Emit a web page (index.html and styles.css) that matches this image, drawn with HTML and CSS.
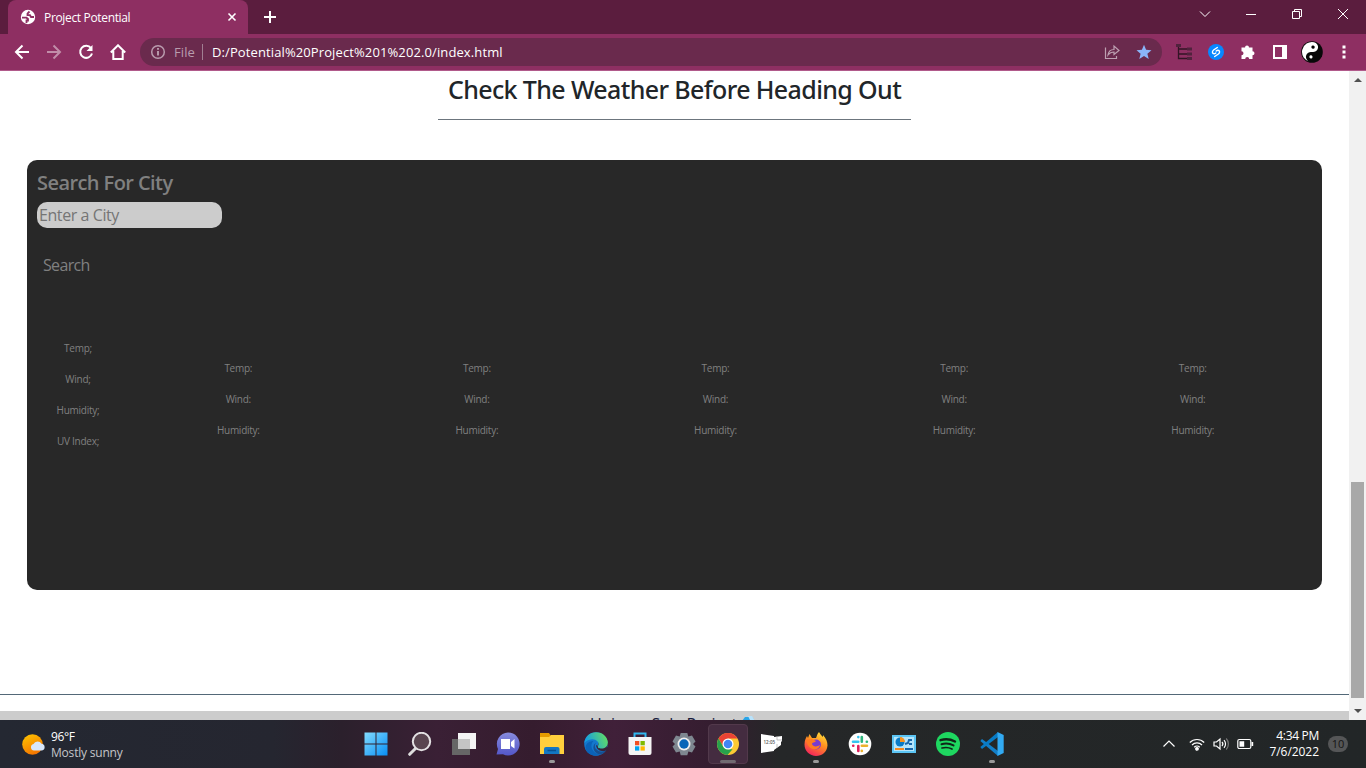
FILE: index.html
```html
<!DOCTYPE html>
<html lang="en">
<head>
<meta charset="utf-8">
<title>Project Potential</title>
<link rel="stylesheet" href="styles.css">
</head>
<body>
<div class="desktop">
  <header class="tabstrip">
    <div class="tab">
      <svg width="16" height="16" viewBox="0 0 16 16"><circle cx="8" cy="8" r="7.2" fill="#fff"/><path d="M9.500 2.500 7.500 4.500v1.700H10l1 1.800h3M2 8.700h4.500L8 10v1.500H6.500V14" fill="none" stroke="#8e2f62" stroke-width="1.800"/></svg>
      <span class="tab-title">Project Potential</span>
      <svg class="tab-close" width="10" height="10" viewBox="0 0 10 10"><path d="m1.500 1.500 7 7m0-7-7 7" stroke="#fff" stroke-width="1.600"/></svg>
    </div>
    <svg class="new-tab" width="14" height="14" viewBox="0 0 14 14"><path d="M7 1v12M1 7h12" stroke="#fff" stroke-width="2"/></svg>
    <div class="window-controls">
      <svg width="12" height="12" viewBox="0 0 12 12"><path d="m1 3.500 5 5 5-5"/></svg>
      <svg width="12" height="12" viewBox="0 0 12 12"><path d="M1 6.500h10"/></svg>
      <svg width="12" height="12" viewBox="0 0 12 12"><path d="M1.500 3.500h7v7h-7zM3.500 3.500v-2h7v7h-2"/></svg>
      <svg width="12" height="12" viewBox="0 0 12 12"><path d="m1 1 10 10M11 1 1 11"/></svg>
    </div>
  </header>
  <div class="toolbar">
    <div class="nav">
      <svg width="16" height="16" viewBox="0 0 16 16"><path d="M15 8H2m6.500-6.500L2 8l6.500 6.500"/></svg>
      <svg class="dim" width="16" height="16" viewBox="0 0 16 16"><path d="M1 8h13M7.500 1.500 14 8l-6.500 6.500"/></svg>
      <svg width="16" height="16" viewBox="0 0 16 16"><path d="M13 4.200A6 6 0 1 0 14 9.500"/><path d="M14.500 1v6h-6z" fill="#fff" stroke="none"/></svg>
      <svg width="16" height="16" viewBox="0 0 16 16"><path d="M.8 8.500 8 1.300l7.200 7.200M3.300 7v8h9.400V7"/></svg>
    </div>
    <div class="address">
      <svg width="16" height="16" viewBox="0 0 16 16"><circle cx="8" cy="8" r="6.300" fill="none" stroke="#b99bad" stroke-width="1.500"/><path d="M8 7v4.500M8 4v1.700" stroke="#c5abba" stroke-width="1.700"/></svg>
      <span class="scheme">File</span>
      <span class="divider"></span>
      <span class="url">D:/Potential%20Project%201%202.0/index.html</span>
      <svg class="share" width="16" height="16" viewBox="0 0 16 16"><path d="M1.500 3.500v11h11V12M4 11c.5-4 3-5.500 6-5.500V2l5 4.500-5 4V8C7.500 8 5.500 9 4 11z" fill="none" stroke="#bda0b1" stroke-width="1.200"/></svg>
      <svg width="16" height="16" viewBox="0 0 16 16"><path d="m8 .8 2.100 5 5.400.4-4.100 3.500 1.300 5.300L8 12.100 3.300 15l1.300-5.300L.5 6.200l5.400-.4z" fill="#8ab4f8"/></svg>
    </div>
    <div class="extensions">
      <svg width="16" height="16" viewBox="0 0 16 16"><path d="M2.500 2v12.500H14M2.500 5H14M2.500 10H14" fill="none" stroke="#321425" stroke-width="1.300"/><path d="M0 0h5v3H0zM11 3.500h5v3h-5zM11 8.500h5v3h-5zM11 13h5v3h-5z" fill="#50223d"/></svg>
      <svg width="16" height="16" viewBox="0 0 16 16"><circle cx="8" cy="8" r="8" fill="#0787ff"/><path d="M9.300 3.500 5.600 6C3.700 7.500 4.300 9.800 6 9.800c.8 0 1.300-.3 1.800-.8M6.700 12.500l3.700-2.500C12.300 8.500 11.700 6.200 10 6.200c-.8 0-1.300.3-1.800.8" fill="none" stroke="#fff" stroke-width="1.400" stroke-linecap="round"/></svg>
      <svg width="16" height="16" viewBox="0 0 16 16"><path d="M1.500 3.500H5a2 2 0 0 1 4 0h3.500v3.700a2 2 0 0 1 0 4V15H9.200a2 2 0 0 0-4 0H1.500v-3.700a2 2 0 0 0 0-4z" fill="#fff"/></svg>
      <svg width="16" height="16" viewBox="0 0 16 16"><path d="M1 1h14v14H1zm2 2v10h7V3z" fill="#fff" fill-rule="evenodd"/></svg>
      <svg class="avatar" width="22" height="22" viewBox="0 0 22 22"><circle cx="11" cy="11" r="10.800" fill="#080808"/><g transform="rotate(12 11 11)"><path d="M11 1a10 10 0 0 0 0 20 5 5 0 0 1 0-10 5 5 0 0 0 0-10z" fill="#fff"/><circle cx="11" cy="6" r="1.700"/><circle cx="11" cy="16" r="1.600" fill="#fff"/></g></svg>
      <svg class="menu-dots" width="4" height="14" viewBox="0 0 4 14"><path d="M.5.500h3v3h-3zM.5 5.500h3v3h-3zM.5 10.500h3v3h-3z" fill="#fff"/></svg>
    </div>
  </div>
  <div class="viewport">
    <main class="page">
      <h2 class="page-title"><span>Check The Weather Before Heading Out</span></h2>
      <section class="weather">
        <h3 class="search-title">Search For City</h3>
        <input class="city" type="text" placeholder="Enter a City">
        <button class="search-button">Search</button>
        <div class="forecast">
          <div class="day today"><p>Temp;</p><p>Wind;</p><p>Humidity;</p><p>UV Index;</p></div>
          <div class="day"><p>Temp:</p><p>Wind:</p><p>Humidity:</p></div>
          <div class="day"><p>Temp:</p><p>Wind:</p><p>Humidity:</p></div>
          <div class="day"><p>Temp:</p><p>Wind:</p><p>Humidity:</p></div>
          <div class="day"><p>Temp:</p><p>Wind:</p><p>Humidity:</p></div>
          <div class="day"><p>Temp:</p><p>Wind:</p><p>Humidity:</p></div>
        </div>
      </section>
      <div class="rule"></div>
      <footer class="footer"><span>Unicorn Solo Project</span><svg width="13" height="12" viewBox="0 0 13 12"><path d="M3 1h7l3 4-6.500 7L0 5z" fill="#2aa5e8"/><path d="M6 0h4l3 5-5-1z" fill="#b8e2fb"/></svg></footer>
    </main>
    <div class="scrollbar">
      <svg width="8" height="4" viewBox="0 0 8 4"><path d="m0 4 4-4 4 4z" fill="#505050"/></svg>
      <div class="thumb"></div>
      <svg width="8" height="4" viewBox="0 0 8 4"><path d="m0 0 4 4 4-4z" fill="#505050"/></svg>
    </div>
  </div>
  <div class="taskbar">
    <div class="widget">
      <svg width="24" height="24" viewBox="0 0 24 24"><defs><linearGradient id="sun" x2=".5" y2="1"><stop stop-color="#ffc800"/><stop offset="1" stop-color="#f47600"/></linearGradient></defs><circle cx="10.500" cy="11.500" r="10.300" fill="url(#sun)"/><path d="M12 17.500a3.300 3.300 0 0 1-.5-6.500 4.500 4.500 0 0 1 8-.2 3.400 3.400 0 0 1 .5 6.700z" fill="#d8e7fb"/></svg>
      <div class="widget-text"><div>96°F</div><div class="condition">Mostly sunny</div></div>
    </div>
    <div class="apps">
      <div class="app"><svg viewBox="0 0 24 24"><defs><linearGradient id="win" x2="1" y2="1"><stop stop-color="#83dcff"/><stop offset="1" stop-color="#078ef4"/></linearGradient></defs><path d="M.5.500h11v11H.5zm12 0h11v11h-11zM.5 12.500h11v11H.5zm12 0h11v11h-11z" fill="url(#win)"/></svg></div>
      <div class="app"><svg viewBox="0 0 24 24"><path d="m8 16-6.300 6.300" stroke="#ddd" stroke-width="3" stroke-linecap="round"/><circle cx="13.500" cy="9.500" r="8.700" fill="#594550" stroke="#e3e1e3" stroke-width="2"/></svg></div>
      <div class="app"><svg viewBox="0 0 24 24"><path d="M6 1h18v16H6z" fill="#f4f4f4"/><path d="M0 7h18v16H0z" fill="#666"/><path d="M6 7h12v10H6z" fill="#c4c4c4"/></svg></div>
      <div class="app"><svg viewBox="0 0 24 24"><defs><linearGradient id="chat" x2="0" y2="1"><stop stop-color="#878bdd"/><stop offset="1" stop-color="#5356c8"/></linearGradient></defs><path d="M12 .5a11.500 11.500 0 1 1-5 21.800L.5 22.500l1.500-5.500A11.500 11.500 0 0 1 12 .5z" fill="url(#chat)"/><path d="M5 7h9v10H5zM15 10l3.500-3v9.500L15 14z" fill="#fff"/></svg></div>
      <div class="app running"><svg viewBox="0 0 24 24"><path d="M0 1h9l2 3-2 2H0z" fill="#e49b00"/><path d="M0 5h9l2-2h13v19H0z" fill="#ffcf3d"/><path d="M4 22v-5a2 2 0 0 1 2-2h11.500a2 2 0 0 1 2 2v5z" fill="#1377c4"/><path d="M7.500 18.500h8.500" stroke="#075292" stroke-width="1.500"/></svg></div>
      <div class="app"><svg viewBox="0 0 24 24"><defs><linearGradient id="edge" y1=".3" x2="1"><stop stop-color="#149ee3"/><stop offset="1" stop-color="#6be356"/></linearGradient></defs><circle cx="12" cy="12" r="11.800" fill="#1478ce"/><path d="M14 15c-1-2 1-3 0-5l10 1c0 4-3 8-10 4z" fill="#38243a"/><path d="M12 13c1 7 7 6.500 11.500 5.500L24 15l-7 1z" fill="#38243a"/><path d="M.3 11C1 4 6.500.200 12 .2c7 0 11.800 5 11.800 10.300 0 4-3 6-6.300 6-2.300 0-4.500-.8-3.500-2.500C16 10 12 7 8 7.200 4.500 7.400 1.800 9 .3 11z" fill="url(#edge)"/><path d="M9.500 9C5 13 8 21.500 16 22.500c-6 3.500-15-1-14.500-7.500C2 11 6 9 9.500 9z" fill="#0b62b8"/><path d="M12 11c-3 3 0 8.500 5.500 8.500 2 0 4-.8 5-1.500-2 2.500-4 4.500-6.500 4.500C9 21.500 7.500 13 12 11z" fill="#164f91"/></svg></div>
      <div class="app"><svg viewBox="0 0 24 24"><path d="M6.500 6V1.500h11V6" fill="none" stroke="#31b8ef" stroke-width="2"/><path d="M.5 5h23v16a2 2 0 0 1-2 2h-19a2 2 0 0 1-2-2z" fill="#f5f5f5"/><path d="M7 9h4.300v4.300H7z" fill="#f25022"/><path d="M12.500 9h4.300v4.300h-4.300z" fill="#7fba00"/><path d="M7 14.300h4.300v4.300H7z" fill="#00a4ef"/><path d="M12.500 14.300h4.300v4.300h-4.300z" fill="#ffb900"/></svg></div>
      <div class="app"><svg viewBox="0 0 24 24"><path d="M8.700 1h6.600l1 3.600 3.700-1 3.500 6-2.500 2.400 2.500 2.600-3.500 6-3.600-1-1.100 3.600H8.700l-1-3.600-3.700 1-3.500-6L3 12 .5 9.500l3.500-6 3.700 1z" fill="#7e8790"/><circle cx="12" cy="12" r="6.500" fill="#eee"/><circle cx="12" cy="12" r="4.700" fill="#0865b8"/></svg></div>
      <div class="app active"><svg viewBox="0 0 24 24"><circle cx="12" cy="12" r="11" fill="#fcc934"/><path d="M2.500 6.500A11 11 0 0 1 21.500 6.500H12L7.500 15z" fill="#ea4335"/><path d="M2.500 6.500 7.400 15 12 17.300h4.600L11.500 23A11 11 0 0 1 2.500 6.500z" fill="#27a14c"/><circle cx="12" cy="12" r="5.500" fill="#fff"/><circle cx="12" cy="12" r="4.300" fill="#4285f4"/></svg></div>
      <div class="app"><svg viewBox="0 0 24 24"><path d="m1 2 13 2v1l8-1v5l-1 1v3l-7 5v1L1 21z" fill="#fff"/><path d="M17 4v4h5M17 12v4" fill="none" stroke="#aaa" stroke-width=".7"/><text class="clock-icon" x="3.500" y="11.500">12:05</text></svg></div>
      <div class="app running"><svg viewBox="0 0 24 24"><defs><linearGradient id="fire" x1=".8" x2=".3" y2="1"><stop stop-color="#ffe33b"/><stop offset=".45" stop-color="#ff9020"/><stop offset="1" stop-color="#f4215d"/></linearGradient></defs><path d="M15 0c1 2 2 3 4 5V3c3 3 4.500 7 4.500 10.500C23 20 18 24 12 24S.3 19 .5 12.500C.6 8 2 6 3 4l1 2 1.500-4L8 6h4c1-2 1-4 3-6z" fill="url(#fire)"/><circle cx="12" cy="12.500" r="5" fill="#783bd0"/><path d="M2 8c2-1 4 0 6-1l4 2c-1 2-4 1-4 3 1 3 5 3 8 1-1 4-4 5-7 4-4-1-6-5-7-9z" fill="#ff7b22"/></svg></div>
      <div class="app"><svg viewBox="0 0 24 24"><circle cx="12" cy="12" r="11.300" fill="#fff"/><g fill="none" stroke-width="2.600" stroke-linecap="round"><path d="M10.300 5v.1M5 9.800h5.300" stroke="#36c5f0"/><path d="M13.800 5v4.800M18.800 9.800h.1" stroke="#2eb67d"/><path d="M13.800 13.800H19M13.800 18.800v.1" stroke="#ecb22e"/><path d="M10.300 14v5M5.200 13.800h.1" stroke="#e01e5a"/></g></svg></div>
      <div class="app"><svg viewBox="0 0 24 24"><path d="M0 3h24v18H0z" fill="#5bc5f4"/><path d="M2 5h20v14H2z" fill="#b5e5fb"/><circle cx="8" cy="10" r="4.500" fill="#087bc7"/><path d="M8 5v5h5A5 5 0 0 0 8 5z" fill="#f79320"/><path d="M3 17h9" stroke="#f58b20" stroke-width="2"/><path d="M13 17h8M13 12l3-1 1-3h3M17 12h3" fill="none" stroke="#1768ad" stroke-width="2"/></svg></div>
      <div class="app"><svg viewBox="0 0 24 24"><circle cx="12" cy="12" r="12" fill="#1ed760"/><g fill="none" stroke="#102418" stroke-linecap="round"><path d="M4.500 8.200c5-1.500 10-1 14.500 1.300" stroke-width="2.400"/><path d="M5.500 12.200c4.300-1.200 8.300-.8 12 1.200" stroke-width="2"/><path d="M6 16c3.500-.9 7-.6 10 1" stroke-width="1.700"/></g></svg></div>
      <div class="app running"><svg viewBox="0 0 24 24"><path d="M2 7 18 19v5L.3 9z" fill="#127fc9"/><path d="M2 17 18 5V0L.3 15z" fill="#087bc5"/><path d="m17.500 0 6.200 3v18l-6.200 3z" fill="#32aaf2"/></svg></div>
    </div>
    <div class="tray">
      <svg width="14" height="14" viewBox="0 0 14 14"><path d="m1.500 9.500 5.500-5.500 5.500 5.500"/></svg>
      <svg class="wifi" width="16" height="16" viewBox="0 0 16 16"><path d="M.8 6.500a10.200 10.200 0 0 1 14.400 0M3 9a7 7 0 0 1 10 0M5.200 11.300a4 4 0 0 1 5.600 0"/><circle cx="8" cy="12.800" r="1.300" fill="#fff"/></svg>
      <svg class="volume" width="16" height="16" viewBox="0 0 16 16"><path d="M1 6h2.500L7 3v10l-3.500-3H1zM9 6a3 3 0 0 1 0 4M11 4.200a5.500 5.500 0 0 1 0 7.600"/><path d="M13.200 2.500a8 8 0 0 1 0 11" stroke="#777"/></svg>
      <svg class="battery" width="17" height="12" viewBox="0 0 17 12"><rect x=".8" y="1.500" width="13" height="9" rx="1.500"/><path d="M2.500 3.200h4.700v5.600H2.500zM14.500 4h1.700v4h-1.700z" fill="#fff" stroke="none"/></svg>
      <div class="clock"><div>4:34 PM</div><div class="date">7/6/2022</div></div>
      <div class="notifications">10</div>
    </div>
  </div>
</div>
</body>
</html>
```
FILE: styles.css
```css
* { box-sizing: border-box; }
body { margin: 0; overflow: hidden; font-family: "Open Sans", "Noto Sans", sans-serif; }
svg { display: block; flex: none; }
.desktop { width: 1366px; height: 768px; display: flex; flex-direction: column; }

.tabstrip { height: 34px; flex: none; display: flex; align-items: center; background: #5b1d3e; padding-left: 8px; }
.tab { width: 240px; height: 34px; border-radius: 8px 8px 0 0; background: #8e2f62; display: flex; align-items: center; padding: 0 11px 0 12px; }
.tab-title { margin-left: 8px; color: #fff; font-size: 12px; letter-spacing: -.34px; white-space: nowrap; }
.tab-close { margin-left: auto; }
.new-tab { margin-left: 15px; }
.window-controls { display: flex; gap: 34px; margin-left: auto; padding: 0 17px 6px 0; fill: none; stroke: #fff; }

.toolbar { height: 37px; flex: none; display: flex; align-items: center; background: #8e2f62; border-bottom: 1px solid #b15a8b; padding: 0 20px 0 14px; }
.nav { display: flex; gap: 16px; width: 126px; fill: none; stroke: #fff; stroke-width: 2; }
.dim { opacity: .45; }
.address { width: 1022px; height: 28px; border-radius: 14px; background: #6a2a4d; display: flex; align-items: center; padding: 0 10px; font-size: 13px; color: #fff; }
.scheme { color: #b99cad; margin-left: 8px; letter-spacing: .1px; }
.divider { width: 1px; height: 16px; background: #a17e92; margin: 0 9px 0 7px; }
.url { letter-spacing: .11px; }
.share { margin: 0 16px 0 auto; }
.extensions { display: flex; align-items: center; gap: 16px; margin-left: 14px; }
.avatar { margin-left: -3px; }
.menu-dots { margin-left: 3px; }

.viewport { height: 649px; flex: none; display: flex; overflow: hidden; background: #fff; }
.page { width: 1349px; overflow: hidden; }
.page-title { margin: 0 auto; width: 473px; height: 49px; border-bottom: 1px solid #6c757d; font-size: 25px; line-height: 36px; font-weight: 500; font-family: "Noto Sans", "Open Sans", sans-serif; text-align: center; color: #212529; white-space: nowrap; letter-spacing: -.62px; }
.weather { margin: 40px 27px 0; height: 430px; border-radius: 10px; background: #282828; color: #808080; padding: 10px; display: flex; flex-direction: column; align-items: flex-start; }
.search-title { margin: 0; height: 32px; font-size: 20px; line-height: 26px; font-weight: 600; letter-spacing: -.57px; }
.city { width: 185px; height: 26px; border: 0; border-radius: 10px; background: #ccc; padding: 1px 2px; font: 16px "Open Sans", sans-serif; letter-spacing: -.42px; }
.city::placeholder { color: #757575; }
.search-button { margin-top: 24px; height: 25px; padding: 0 6px; border: 0; background: none; color: #808080; font: 16px "Open Sans", sans-serif; letter-spacing: -.65px; }
.forecast { width: 1275px; margin-top: 64px; display: grid; grid-template-columns: 82px repeat(5, 1fr); align-items: start; }
.day { padding-top: 20px; text-align: center; font-size: 10px; line-height: 15px; letter-spacing: -.26px; }
.today { padding-top: 0; }
.day p { margin: 0 0 16px; }
.rule { margin-top: 104px; height: 1px; background: #536878; }
.footer { margin-top: 16px; height: 40px; background: #ccc; display: flex; justify-content: center; gap: 5px; color: #171b3c; font-size: 16px; line-height: 24px; letter-spacing: -.24px; padding: 1px 4px 0 0; }
.footer svg { margin-top: 4px; }
.scrollbar { width: 17px; background: #f1f1f1; display: flex; flex-direction: column; align-items: center; padding: 7px 0; }
.thumb { width: 13px; height: 216px; background: #a8a8a8; margin: auto 0 11px; }

.taskbar { height: 48px; display: flex; color: #fff; background: linear-gradient(90deg, #242832 0, #252630 20%, #2b202c 25%, #3a2035 32%, #351c2e 39%, #402039 45%, #351d30 52%, #252728 57%, #222627 100%); }
.widget { width: 356px; display: flex; align-items: center; gap: 5px; padding: 2px 0 0 22px; }
.widget-text { font-size: 12px; line-height: 16px; letter-spacing: -.35px; }
.condition { color: #c4c5c9; letter-spacing: -.2px; }
.apps { display: flex; align-items: center; gap: 4px; }
.app { position: relative; width: 40px; height: 40px; display: grid; place-items: center; border-radius: 4px; }
.app svg { width: 24px; height: 24px; }
.active { background: #442c40; border: 1px solid #52394b; }
.running::after, .active::after { content: ""; position: absolute; bottom: 1px; left: 17px; width: 6px; height: 3px; border-radius: 2px; background: #999; }
.active::after { left: 11px; bottom: 0; width: 16px; background: #716b71; }
.clock-icon { font-size: 4.500px; fill: #555; font-weight: 600; }
.tray { margin-left: auto; display: flex; align-items: center; padding-right: 18px; fill: none; stroke: #fff; stroke-width: 1.200; }
.wifi { margin-left: 13px; }
.volume { margin-left: 8px; }
.battery { margin-left: 8px; }
.clock { width: 58px; margin-left: 7px; text-align: right; font-size: 12px; line-height: 16px; letter-spacing: -.3px; }
.date { letter-spacing: -.05px; }
.notifications { margin-left: 9px; width: 20px; height: 16px; border-radius: 8px; background: #555657; color: #151515; text-align: center; font-size: 11px; line-height: 16px; }
```
